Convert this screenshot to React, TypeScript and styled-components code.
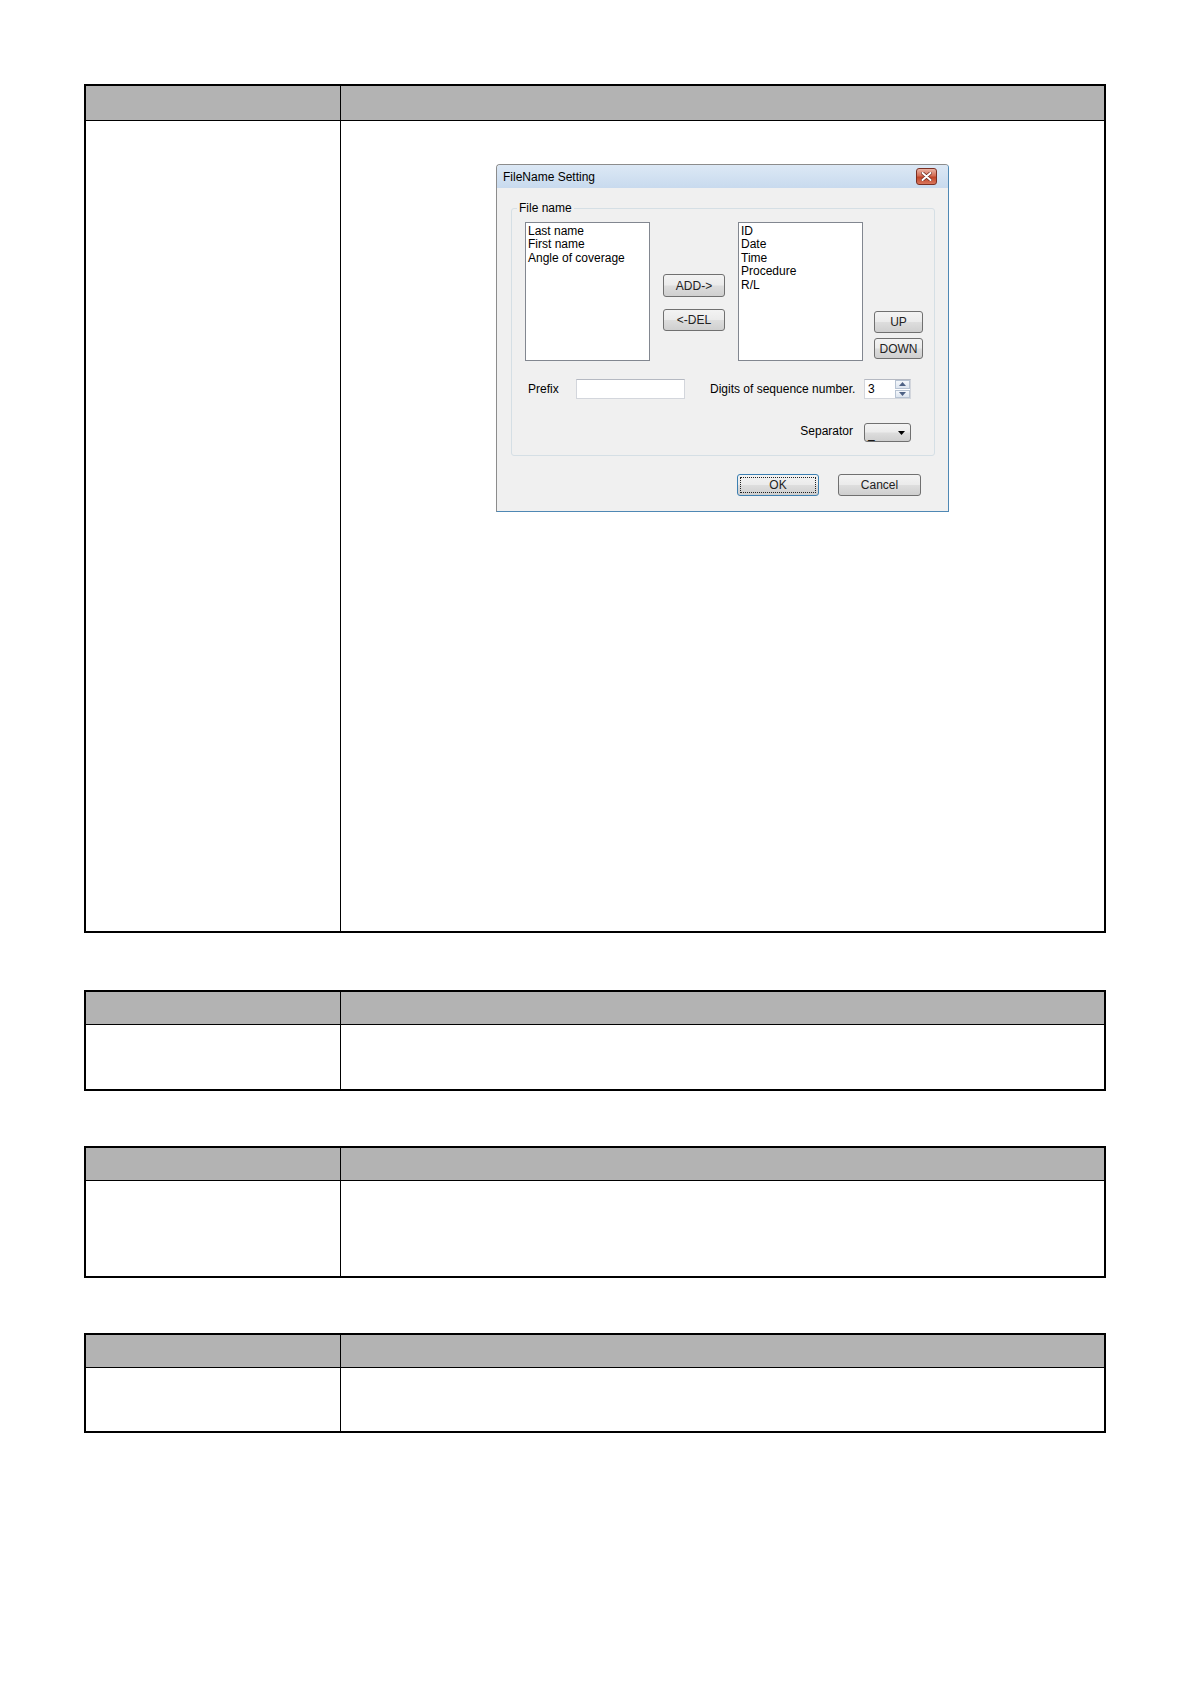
import styled, { createGlobalStyle } from 'styled-components';

const GlobalStyle = createGlobalStyle`
  html, body {
    margin: 0;
    padding: 0;
    background: #fff;
  }
  body {
    font-family: "Liberation Sans", Arial, sans-serif;
  }
`;

const Page = styled.div`
  padding: 84px 0 0 84px;
  min-height: 1684px;
  box-sizing: border-box;
`;

const Table = styled.div<{ $head: number; $body: number; $gap: number }>`
  width: 1022px;
  box-sizing: border-box;
  margin-top: ${(p) => p.$gap}px;
  border: 2px solid #000;
  display: grid;
  grid-template-columns: 255px 1fr;
  grid-template-rows: ${(p) => p.$head}px ${(p) => p.$body}px;
`;

const HeadCell = styled.div<{ $first?: boolean }>`
  background: #b3b3b3;
  border-bottom: 1px solid #000;
  border-right: ${(p) => (p.$first ? '1px solid #000' : 'none')};
`;

const BodyCell = styled.div<{ $first?: boolean }>`
  background: #fff;
  border-right: ${(p) => (p.$first ? '1px solid #000' : 'none')};
  display: flex;
  flex-direction: column;
  align-items: center;
`;

/* ---------- dialog ---------- */

const Dialog = styled.div`
  margin-top: 43px;
  width: 453px;
  height: 348px;
  box-sizing: border-box;
  border: 1px solid;
  border-color: #8c8c8c #4f88b4 #4f88b4 #8c8c8c;
  border-radius: 4px 4px 0 0;
  background: #f0f0f0;
  font-size: 12px;
  color: #000;
  display: flex;
  flex-direction: column;
`;

const TitleBar = styled.div`
  height: 23px;
  display: flex;
  align-items: center;
  justify-content: space-between;
  padding: 0 11px 0 6px;
  background: linear-gradient(#dce8f5, #c8daee);
  border-radius: 3px 3px 0 0;
`;

const Title = styled.span`
  font-size: 12px;
  line-height: 14px;
`;

const CloseBtn = styled.div`
  width: 21px;
  height: 17px;
  box-sizing: border-box;
  border: 1px solid #7a2f22;
  border-radius: 3px;
  background: linear-gradient(#eab3a4, #d36d55 45%, #c04428 55%, #d9765c);
  display: flex;
  align-items: center;
  justify-content: center;
`;

const Client = styled.div`
  flex: 1;
  padding: 20px 13px 0 14px;
  display: flex;
  flex-direction: column;
`;

const GroupBox = styled.div`
  position: relative;
  border: 1px solid #d5dfe5;
  border-radius: 3px;
  padding: 13px 11px 13px 13px;
  display: flex;
  flex-direction: column;
`;

const Legend = styled.span`
  position: absolute;
  top: -8px;
  left: 5px;
  padding: 0 2px;
  background: #f0f0f0;
  line-height: 14px;
`;

const ListRow = styled.div`
  display: flex;
  height: 139px;
`;

const ListBox = styled.div`
  width: 125px;
  height: 139px;
  flex-shrink: 0;
  box-sizing: border-box;
  border: 1px solid #828790;
  background: #fff;
  padding: 2px 2px;
  line-height: 13.4px;
`;

const ButtonColumn = styled.div<{ $top: number; $gap: number; $left: number; $right: number }>`
  display: flex;
  flex-direction: column;
  flex-shrink: 0;
  padding-top: ${(p) => p.$top}px;
  gap: ${(p) => p.$gap}px;
  margin: 0 ${(p) => p.$right}px 0 ${(p) => p.$left}px;
`;

const Button = styled.div<{ $w: number; $h: number; $focus?: boolean }>`
  width: ${(p) => p.$w}px;
  height: ${(p) => p.$h}px;
  flex-shrink: 0;
  box-sizing: border-box;
  border: 1px solid ${(p) => (p.$focus ? '#3c7fb1' : '#707070')};
  border-radius: 3px;
  background: linear-gradient(#f3f3f3 0%, #ebebeb 48%, #dddddd 52%, #cfcfcf 100%);
  display: flex;
  align-items: center;
  justify-content: center;
  line-height: 14px;
  color: #222;
  padding: 2px;
`;

const FocusRect = styled.div`
  flex: 1;
  align-self: stretch;
  border: 1px dotted #222;
  display: flex;
  align-items: center;
  justify-content: center;
`;

const FieldRow = styled.div`
  display: flex;
  align-items: center;
  height: 20px;
  margin-top: 18px;
`;

const Label = styled.span<{ $w: number; $indent?: number }>`
  width: ${(p) => p.$w}px;
  margin-left: ${(p) => p.$indent || 0}px;
  flex-shrink: 0;
  white-space: nowrap;
`;

const TextInput = styled.div<{ $w: number }>`
  width: ${(p) => p.$w}px;
  height: 20px;
  flex-shrink: 0;
  box-sizing: border-box;
  border: 1px solid #d3d6dc;
  border-top-color: #b5b9c2;
  background: #fff;
  margin-right: 25px;
`;

const Spinner = styled.div`
  width: 47px;
  height: 20px;
  flex-shrink: 0;
  margin-left: 10px;
  box-sizing: border-box;
  border: 1px solid #d3d6dc;
  border-top-color: #b5b9c2;
  background: #fff;
  display: flex;
`;

const SpinValue = styled.span`
  flex: 1;
  padding-left: 3px;
  line-height: 18px;
`;

const SpinButtons = styled.div`
  width: 15px;
  display: flex;
  flex-direction: column;
  gap: 1px;
`;

const SpinBtn = styled.div`
  flex: 1;
  box-sizing: border-box;
  border: 1px solid #b7c3d3;
  background: linear-gradient(#f4f7fb, #dde5ef);
  display: flex;
  align-items: center;
  justify-content: center;
`;

const SepRow = styled.div`
  display: flex;
  align-items: center;
  justify-content: flex-end;
  height: 19px;
  margin-top: 24px;
  padding-right: 12px;
  gap: 11px;
`;

const SepLabel = styled.span`
  margin-bottom: 3px;
`;

const Combo = styled.div`
  width: 47px;
  height: 19px;
  box-sizing: border-box;
  border: 1px solid #707070;
  border-radius: 3px;
  background: linear-gradient(#f3f3f3 0%, #ebebeb 48%, #dddddd 52%, #cfcfcf 100%);
  display: flex;
  align-items: center;
  justify-content: space-between;
  padding: 0 5px 0 3px;
`;

const ComboValue = styled.span`
  line-height: 14px;
  margin-top: 2px;
`;

const FooterRow = styled.div`
  display: flex;
  justify-content: flex-end;
  gap: 19px;
  margin-top: 18px;
  padding-right: 14px;
`;

const Triangle = ({ up, color }: { up?: boolean; color: string }) => (
  <svg width="7" height="4" viewBox="0 0 7 4">
    <path d={up ? 'M0 4 L3.5 0 L7 4 Z' : 'M0 0 L7 0 L3.5 4 Z'} fill={color} />
  </svg>
);

const CloseIcon = () => (
  <svg width="11" height="9" viewBox="0 0 11 9">
    <path d="M1.5 1 L9.5 8 M9.5 1 L1.5 8" stroke="#6e2a1e" strokeWidth="3.4" strokeLinecap="round" />
    <path d="M1.5 1 L9.5 8 M9.5 1 L1.5 8" stroke="#fff" strokeWidth="2" strokeLinecap="round" />
  </svg>
);

const leftItems = ['Last name', 'First name', 'Angle of coverage'];
const rightItems = ['ID', 'Date', 'Time', 'Procedure', 'R/L'];

const FileNameDialog = () => (
  <Dialog>
    <TitleBar>
      <Title>FileName Setting</Title>
      <CloseBtn>
        <CloseIcon />
      </CloseBtn>
    </TitleBar>
    <Client>
      <GroupBox>
        <Legend>File name</Legend>
        <ListRow>
          <ListBox>
            {leftItems.map((t) => (
              <div key={t}>{t}</div>
            ))}
          </ListBox>
          <ButtonColumn $top={52} $gap={12} $left={13} $right={13}>
            <Button $w={62} $h={23}>ADD-&gt;</Button>
            <Button $w={62} $h={22}>&lt;-DEL</Button>
          </ButtonColumn>
          <ListBox>
            {rightItems.map((t) => (
              <div key={t}>{t}</div>
            ))}
          </ListBox>
          <ButtonColumn $top={89} $gap={5} $left={11} $right={0}>
            <Button $w={49} $h={22}>UP</Button>
            <Button $w={49} $h={21}>DOWN</Button>
          </ButtonColumn>
        </ListRow>
        <FieldRow>
          <Label $w={48} $indent={3}>Prefix</Label>
          <TextInput $w={109} />
          <Label $w={144}>Digits of sequence number.</Label>
          <Spinner>
            <SpinValue>3</SpinValue>
            <SpinButtons>
              <SpinBtn>
                <Triangle up color="#4d6185" />
              </SpinBtn>
              <SpinBtn>
                <Triangle color="#4d6185" />
              </SpinBtn>
            </SpinButtons>
          </Spinner>
        </FieldRow>
        <SepRow>
          <SepLabel>Separator</SepLabel>
          <Combo>
            <ComboValue>_</ComboValue>
            <Triangle color="#000" />
          </Combo>
        </SepRow>
      </GroupBox>
      <FooterRow>
        <Button $w={82} $h={22} $focus>
          <FocusRect>OK</FocusRect>
        </Button>
        <Button $w={83} $h={22}>Cancel</Button>
      </FooterRow>
    </Client>
  </Dialog>
);

const tables = [
  { head: 35, body: 810, gap: 0, dialog: true },
  { head: 33, body: 64, gap: 57 },
  { head: 33, body: 95, gap: 55 },
  { head: 33, body: 63, gap: 55 },
];

const App = () => (
  <>
    <GlobalStyle />
    <Page>
      {tables.map((t, i) => (
        <Table key={i} $head={t.head} $body={t.body} $gap={t.gap}>
          <HeadCell $first />
          <HeadCell />
          <BodyCell $first />
          <BodyCell>{t.dialog && <FileNameDialog />}</BodyCell>
        </Table>
      ))}
    </Page>
  </>
);

export default App;
